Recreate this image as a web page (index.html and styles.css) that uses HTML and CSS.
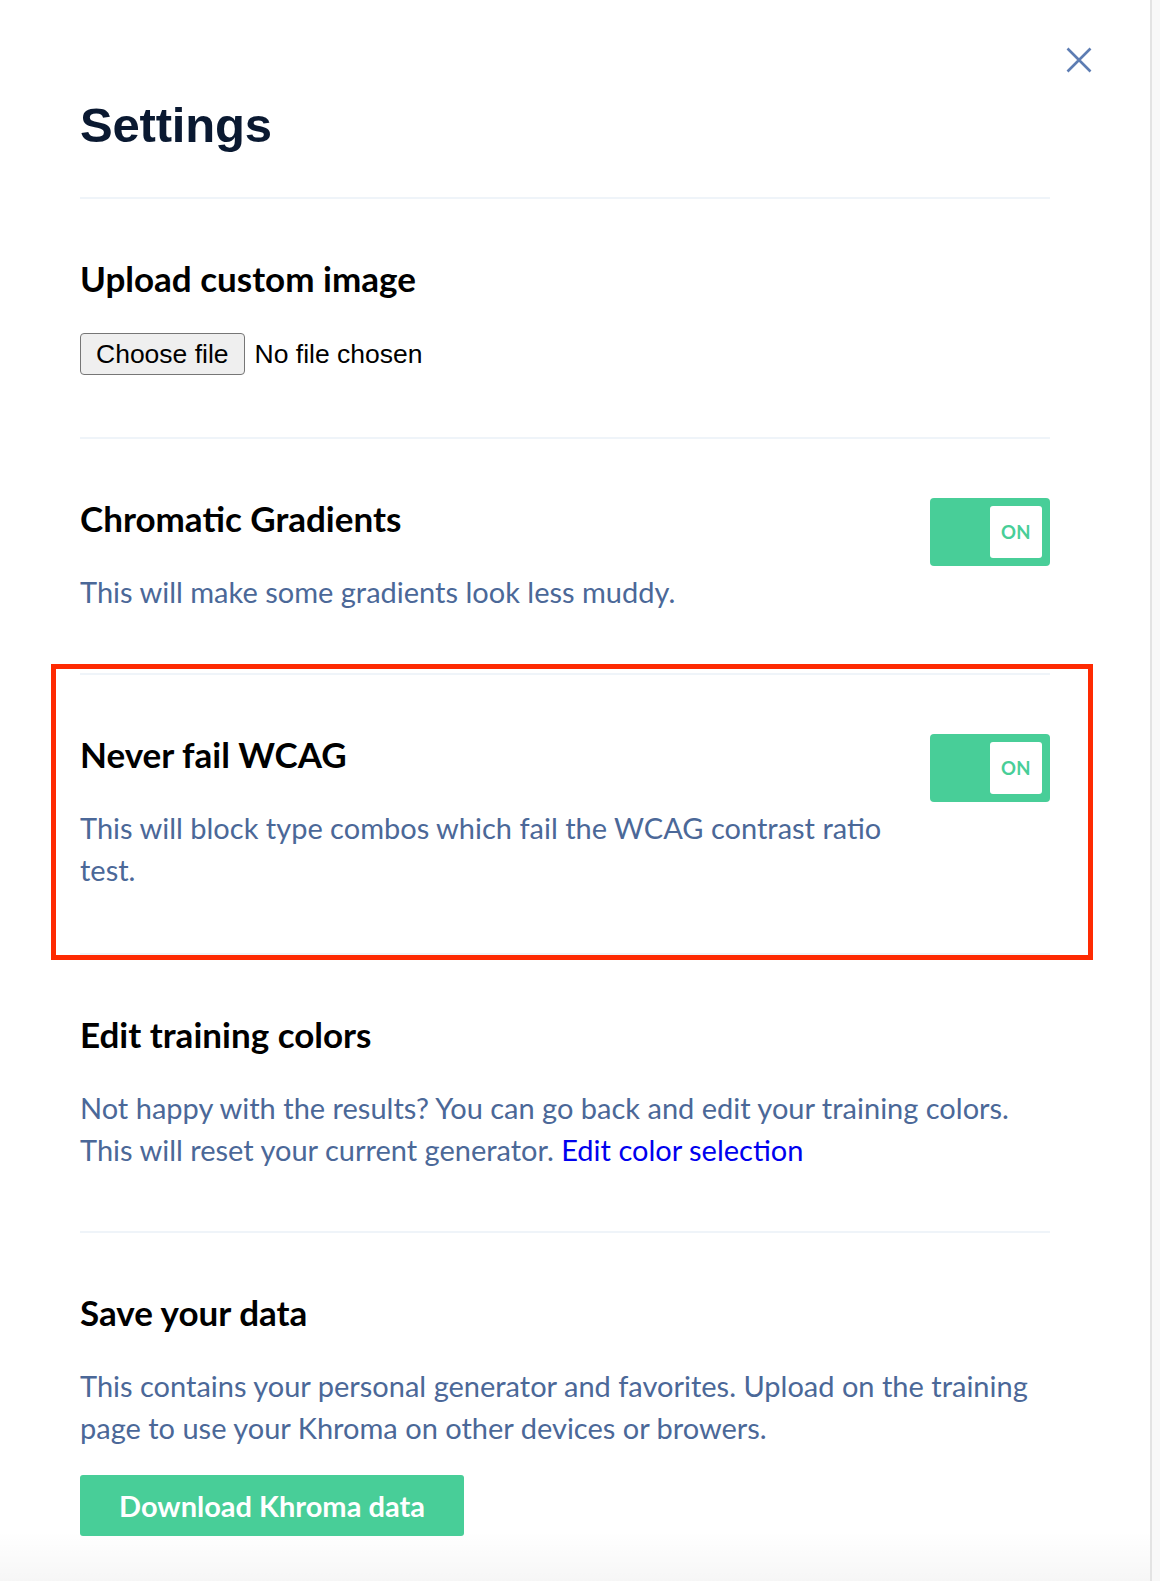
FILE: index.html
```html
<!DOCTYPE html>
<html lang="en">
<head>
<meta charset="utf-8">
<title>Settings</title>
<link rel="stylesheet" href="styles.css">
</head>
<body>
<div class="page">
  <main class="panel">
    <button class="close" aria-label="Close">
      <svg width="26" height="26" viewBox="0 0 26 26"><path d="M1.5 1.5 L24.5 24.5 M24.5 1.5 L1.5 24.5" stroke="#5d7db3" stroke-width="2.6" fill="none"/></svg>
    </button>
    <h1 class="title">Settings</h1>

    <section class="section section--upload">
      <div class="section__main">
        <h2 class="section__title">Upload custom image</h2>
        <div class="file-row">
          <label class="file-btn">Choose file<input type="file" class="file-input"></label>
          <span class="file-name">No file chosen</span>
        </div>
      </div>
    </section>

    <section class="section">
      <div class="section__main">
        <h2 class="section__title">Chromatic Gradients</h2>
        <p class="section__text">This will make some gradients look less muddy.</p>
      </div>
      <div class="toggle"><span class="toggle__knob">ON</span></div>
    </section>

    <section class="section section--marked">
      <div class="section__main">
        <h2 class="section__title">Never fail WCAG</h2>
        <p class="section__text">This will block type combos which fail the WCAG contrast ratio test.</p>
      </div>
      <div class="toggle"><span class="toggle__knob">ON</span></div>
      <div class="highlight"></div>
    </section>

    <section class="section">
      <div class="section__main">
        <h2 class="section__title">Edit training colors</h2>
        <p class="section__text">Not happy with the results? You can go back and edit your training colors. This will reset your current generator. <a class="link" href="#">Edit color selection</a></p>
      </div>
    </section>

    <section class="section section--last">
      <div class="section__main">
        <h2 class="section__title">Save your data</h2>
        <p class="section__text">This contains your personal generator and favorites. Upload on the training page to use your Khroma on other devices or browers.</p>
        <button class="download">Download Khroma data</button>
      </div>
    </section>
    <div class="fade"></div>
  </main>
  <aside class="edge"></aside>
</div>
</body>
</html>
```
FILE: styles.css
```css
* { box-sizing: border-box; }
html, body { margin: 0; padding: 0; height: 1581px; overflow: hidden; background: #fff; }
body { font-family: "Lato", "Noto Sans", sans-serif; }

.page { display: flex; height: 1581px; }

.panel {
  position: relative;
  width: 1150px;
  flex-shrink: 0;
  padding: 97px 100px 0 80px;
  background: #fff;
}

.close {
  position: absolute;
  top: 47px;
  left: 1066px;
  width: 26px;
  height: 26px;
  padding: 0;
  border: 0;
  background: none;
  display: block;
}
.close svg { display: block; }

.title {
  margin: 0 0 44px;
  font-family: "Liberation Sans", Arial, sans-serif;
  font-weight: 700;
  font-size: 49px;
  line-height: 56px;
  color: #0a1931;
  letter-spacing: -0.2px;
}

.section {
  position: relative;
  display: flex;
  align-items: flex-start;
  border-top: 2px solid #eff4f9;
  padding: 59px 0 60px;
}
.section--upload { padding-bottom: 62px; }
.section--marked { padding-bottom: 62px; }

.section__main { flex: 1; min-width: 0; }

.section__title {
  margin: 0;
  font-family: "Lato", sans-serif;
  font-weight: 700;
  font-size: 35px;
  line-height: 40px;
  color: #000;
}

.section__text {
  margin: 33px 0 0;
  font-size: 29px;
  line-height: 42px;
  color: #4b6898;
  max-width: 820px;
}
.section .section__main:only-child .section__text { max-width: none; }

.link { color: #0000ee; text-decoration: none; }

.file-row {
  margin-top: 35px;
  display: flex;
  align-items: center;
  font-family: "Liberation Sans", Arial, sans-serif;
  font-size: 26.5px;
  color: #000;
}
.file-btn {
  display: flex;
  align-items: center;
  height: 42px;
  padding: 0 15px;
  border: 1px solid #767676;
  border-radius: 4px;
  background: #efefef;
  color: #000;
}
.file-input { display: none; }
.file-name { margin-left: 10px; }

.toggle {
  flex-shrink: 0;
  margin-left: 30px;
  width: 120px;
  height: 68px;
  padding: 8px;
  border-radius: 4px;
  background: #48ce98;
  display: flex;
  justify-content: flex-end;
}
.toggle__knob {
  width: 52px;
  height: 52px;
  border-radius: 3px;
  background: #fff;
  display: flex;
  align-items: center;
  justify-content: center;
  font-family: "Lato", sans-serif;
  font-weight: 700;
  font-size: 18.5px;
  color: #48ce98;
  letter-spacing: 0.3px;
}

.download {
  display: block;
  margin-top: 26px;
  width: 384px;
  height: 61px;
  padding: 0;
  border: 0;
  border-radius: 3px;
  background: #48ce98;
  color: #fff;
  font-family: "Lato", sans-serif;
  font-weight: 700;
  font-size: 29px;
  text-align: center;
}

.highlight {
  position: absolute;
  top: -11px;
  left: -29px;
  width: 1042px;
  height: 296px;
  border: 5px solid #fe2a02;
  pointer-events: none;
}

.fade {
  position: absolute;
  left: 0;
  right: 0;
  bottom: 0;
  height: 50px;
  background: linear-gradient(to bottom, rgba(0,0,0,0), rgba(0,0,0,0.035));
  pointer-events: none;
}

.edge {
  flex: 1;
  border-left: 2px solid #e3e3e3;
  background: #f8f8f8;
}
```
